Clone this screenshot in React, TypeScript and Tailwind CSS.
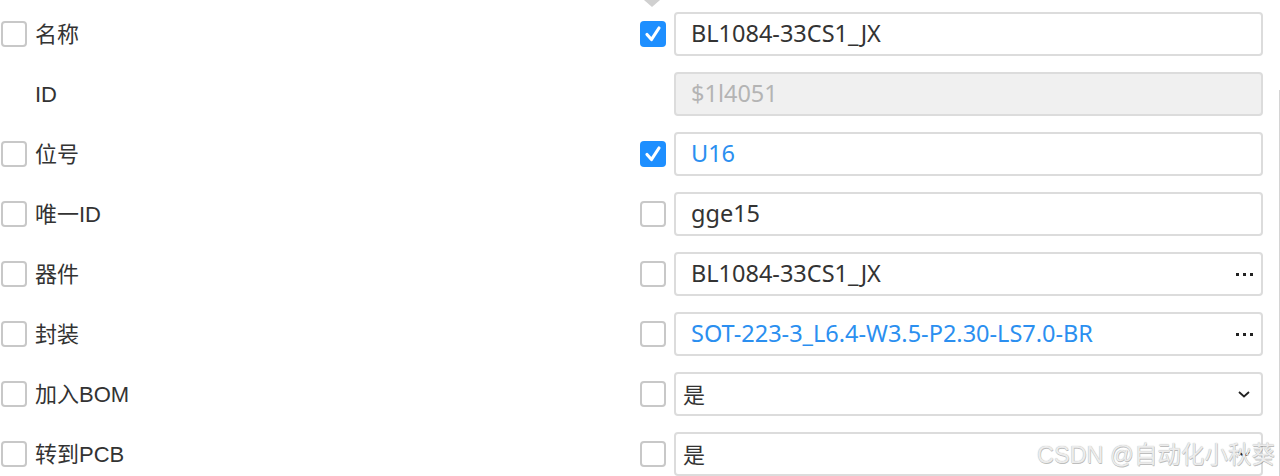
import React from "react";

type Row = {
  label: string;
  noLeftCheck?: boolean;
  rightCheck?: "checked" | "unchecked" | "none";
  value: string;
  kind: "input" | "disabled" | "more" | "select";
  blue?: boolean;
};

const rows: Row[] = [
  { label: "名称", rightCheck: "checked", value: "BL1084-33CS1_JX", kind: "input" },
  { label: "ID", noLeftCheck: true, rightCheck: "none", value: "$1l4051", kind: "disabled" },
  { label: "位号", rightCheck: "checked", value: "U16", kind: "input", blue: true },
  { label: "唯一ID", rightCheck: "unchecked", value: "gge15", kind: "input" },
  { label: "器件", rightCheck: "unchecked", value: "BL1084-33CS1_JX", kind: "more" },
  { label: "封装", rightCheck: "unchecked", value: "SOT-223-3_L6.4-W3.5-P2.30-LS7.0-BR", kind: "more", blue: true },
  { label: "加入BOM", rightCheck: "unchecked", value: "是", kind: "select" },
  { label: "转到PCB", rightCheck: "unchecked", value: "是", kind: "select" },
];

function Box({ checked }: { checked?: boolean }) {
  if (checked) {
    return (
      <div className="w-[26px] h-[26px] rounded-[4px] bg-[#1e8fff] flex items-center justify-center">
        <svg width="20" height="20" viewBox="0 0 20 20">
          <path d="M4 10.5 L8.5 15.5 L16 4" fill="none" stroke="#fff" strokeWidth="3.2" strokeLinecap="round" strokeLinejoin="round" />
        </svg>
      </div>
    );
  }
  return <div className="w-[26px] h-[26px] rounded-[4px] border-2 border-[#c8c8c8] bg-white" />;
}

const labelFont = { fontFamily: '"Liberation Sans", "Noto Sans CJK SC", sans-serif' };
const valueFont = { fontFamily: '"Noto Sans", "Noto Sans CJK SC", sans-serif' };

export default function App() {
  return (
    <div className="relative w-[1280px] h-[476px] bg-white overflow-hidden">
      <div className="absolute left-[644px] top-0 w-0 h-0 border-l-[8px] border-r-[8px] border-t-[7px] border-l-transparent border-r-transparent border-t-[#d0d0d0]" />
      <div className="absolute right-0 top-[90px] bottom-0 w-px bg-[#d4d4d4]" />
      <div className="flex flex-col pt-[4px]">
        {rows.map((r, i) => (
          <div key={i} className="h-[60px] flex items-center">
            <div className="w-[640px] flex items-center pl-[1px]">
              <div className="w-[34px]">{!r.noLeftCheck && <Box />}</div>
              <span className="text-[22px] text-[#333]" style={labelFont}>
                {r.label}
              </span>
            </div>
            <div className="w-[34px]">
              {r.rightCheck === "checked" && <Box checked />}
              {r.rightCheck === "unchecked" && <Box />}
            </div>
            <div
              className={
                "w-[589px] h-[44px] rounded-[4px] border-2 border-[#dcdcdc] flex items-center " +
                (r.kind === "disabled" ? "bg-[#f0f0f0] " : "bg-white ") +
                (r.kind === "select" ? "pl-[7px] pr-[10px]" : "pl-[15px] pr-[6px]")
              }
            >
              <span
                className={
                  "flex-1 " +
                  (r.kind === "select" ? "text-[22px] " : "text-[23.5px] ") +
                  (r.kind === "disabled" ? "text-[#b4b4b4]" : r.blue ? "text-[#2b8ff0]" : "text-[#333]")
                }
                style={valueFont}
              >
                {r.value}
              </span>
              {r.kind === "more" && (
                <span className="flex gap-[4px] items-center pr-[2px]">
                  <span className="w-[3px] h-[3px] bg-[#222]" />
                  <span className="w-[3px] h-[3px] bg-[#222]" />
                  <span className="w-[3px] h-[3px] bg-[#222]" />
                </span>
              )}
              {r.kind === "select" && (
                <svg width="14" height="10" viewBox="0 0 14 10">
                  <path d="M2 3 L7 7.5 L12 3" fill="none" stroke="#222" strokeWidth="1.8" />
                </svg>
              )}
            </div>
          </div>
        ))}
      </div>
      <div
        className="absolute left-[1037px] top-[438px] text-[23.5px] text-[#ececec] whitespace-nowrap"
        style={{ ...labelFont, textShadow: "0 0 1px #aaa, 0.5px 0.5px 0.5px rgba(0,0,0,0.25)" }}
      >
        CSDN @自动化小秋葵
      </div>
    </div>
  );
}
